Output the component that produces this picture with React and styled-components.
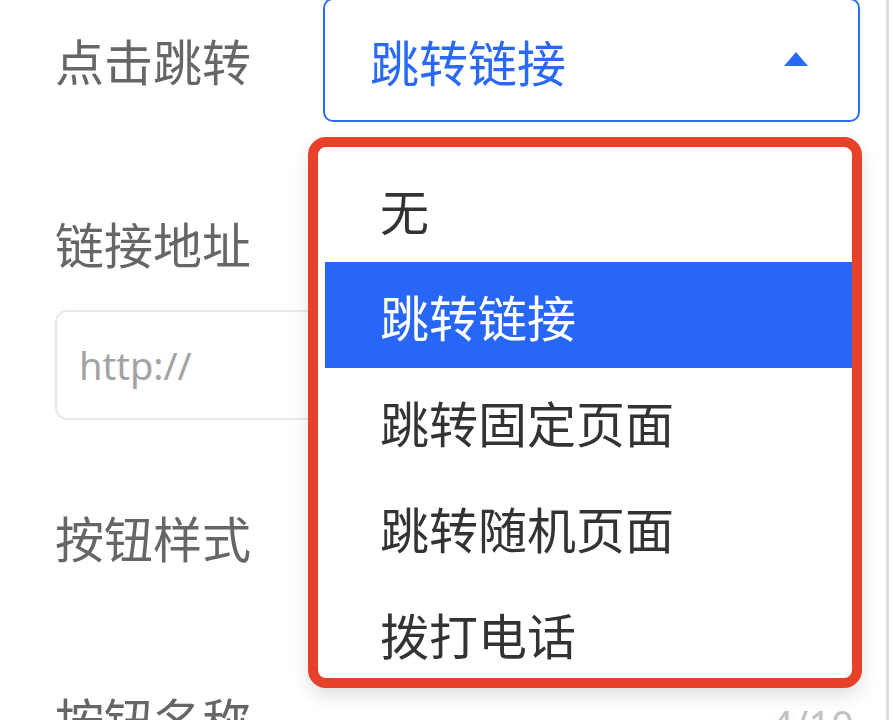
import React from 'react';
import styled, { createGlobalStyle } from 'styled-components';

const GlobalStyle = createGlobalStyle`
    html, body {
        margin: 0;
        padding: 0;
        background: #fff;
    }
    body {
        font-family: "Noto Sans CJK SC", "Noto Sans", sans-serif;
    }
`;

const Page = styled.div`
    width: 886px;
    height: 720px;
    overflow: hidden;
    border-right: 3px solid #dcdcdc;
    background: #fff;
`;

const Form = styled.div`
    padding: 0 26px 0 55px;
    display: flex;
    flex-direction: column;
`;

const InlineRow = styled.div`
    display: flex;
    align-items: center;
    margin-top: -2px;
`;

const Label = styled.div`
    width: ${props => props.inline ? '268px' : 'auto'};
    flex-shrink: 0;
    font-size: 49px;
    line-height: 48px;
    color: #666;
    margin-top: ${props => props.gap || 0}px;
`;

const SelectWrap = styled.div`
    position: relative;
    width: 537px;
    flex-shrink: 0;
`;

const SelectBox = styled.div`
    height: 120px;
    box-sizing: content-box;
    border: 2px solid #2d6cf6;
    border-radius: 10px;
    display: flex;
    align-items: center;
    justify-content: space-between;
    padding: 0 50px 0 45px;
    font-size: 49px;
    color: #2a68f6;
`;

const Caret = styled.svg`
    width: 24px;
    height: 14px;
    margin-top: -2px;
`;

const Dropdown = styled.div`
    position: absolute;
    left: -15px;
    top: 139px;
    width: 554px;
    height: 551px;
    box-sizing: border-box;
    border: 10px solid #e8412a;
    border-radius: 18px;
    background: #fff;
    overflow: hidden;
    box-shadow: 0 8px 18px rgba(0, 0, 0, 0.12);
    z-index: 2;
`;

const Menu = styled.ul`
    list-style: none;
    margin: 0;
    padding: 9px 0 0 7px;
`;

const Item = styled.li`
    height: 106px;
    display: flex;
    align-items: center;
    padding-left: 55px;
    font-size: 49px;
    color: ${props => props.active ? '#fff' : '#333'};
    background: ${props => props.active ? '#2867f6' : 'transparent'};
`;

const Input = styled.div`
    margin-top: 43px;
    height: 106px;
    box-sizing: content-box;
    border: 2px solid #e7e9ec;
    border-radius: 12px;
    display: flex;
    align-items: center;
    padding-left: 22px;
    font-family: "Noto Sans", "Liberation Sans", sans-serif;
    font-size: 38px;
    color: #a3a3a3;
`;

const NameRow = styled.div`
    display: flex;
    justify-content: space-between;
    align-items: flex-start;
`;

const Counter = styled.span`
    margin-top: 136px;
    margin-right: 6px;
    font-family: "Noto Sans", "Liberation Sans", sans-serif;
    font-size: 40px;
    color: #c2c2c2;
`;

const options = ['无', '跳转链接', '跳转固定页面', '跳转随机页面', '拨打电话'];

const App = () => {
    return (
        <Page>
            <GlobalStyle />
            <Form>
                <InlineRow>
                    <Label inline>点击跳转</Label>
                    <SelectWrap>
                        <SelectBox>
                            <span>跳转链接</span>
                            <Caret viewBox="0 0 24 14">
                                <polygon points="12,0 24,14 0,14" fill="#2a68f6" />
                            </Caret>
                        </SelectBox>
                        <Dropdown>
                            <Menu>
                                {options.map(o => (
                                    <Item key={o} active={o === '跳转链接'}>{o}</Item>
                                ))}
                            </Menu>
                        </Dropdown>
                    </SelectWrap>
                </InlineRow>
                <Label gap={97}>链接地址</Label>
                <Input>http://</Input>
                <Label gap={93}>按钮样式</Label>
                <NameRow>
                    <Label gap={134}>按钮名称</Label>
                    <Counter>4/10</Counter>
                </NameRow>
            </Form>
        </Page>
    );
};

export default App;
